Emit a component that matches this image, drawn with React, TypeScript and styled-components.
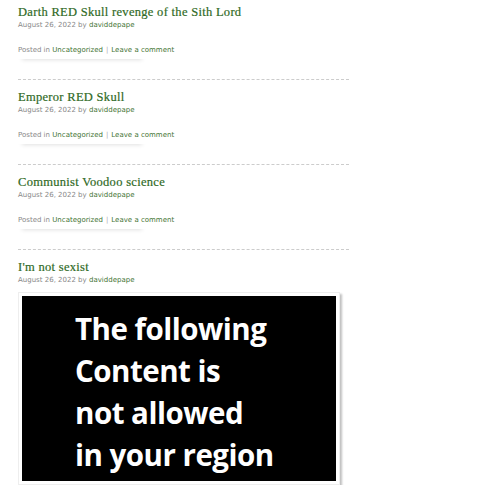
import React from "react";
import styled, {createGlobalStyle} from "styled-components";

const GlobalStyle = createGlobalStyle`
    body {
        margin: 0;
        background: #fff;
    }
`;

const Page = styled.div`
    width: 331px;
    padding: 5px 0 0 18px;
`;

const Post = styled.div<{ last?: boolean }>`
    padding-bottom: ${p => p.last ? "0" : "20px"};
    margin-bottom: ${p => p.last ? "0" : "10px"};
    border-bottom: ${p => p.last ? "none" : "1px dashed #ccc"};
`;

const Title = styled.h2`
    margin: 0;
    font-family: "Liberation Serif", Georgia, serif;
    font-weight: normal;
    font-size: 12.5px;
    line-height: 14px;
    color: #2f6a25;
    letter-spacing: 0.3px;
    -webkit-text-stroke: 0.2px #2f6a25;
`;

const Meta = styled.div`
    margin-top: 1px;
    font-family: "DejaVu Sans", Verdana, sans-serif;
    font-size: 7px;
    line-height: 10px;
    color: #888;
`;

const Link = styled.a`
    color: #3f7434;
    text-decoration: none;
`;

const Footer = styled.div`
    margin-top: 15px;
    font-family: "DejaVu Sans", Verdana, sans-serif;
    font-size: 7px;
    line-height: 10px;
    color: #888;
    width: 128px;
    padding-bottom: 4px;
    box-shadow: 0 5px 4px -4px rgba(0, 0, 0, 0.12);
    white-space: nowrap;
`;

const Sep = styled.span`
    color: #aaa;
    margin: 0 3px;
`;

const Frame = styled.div`
    margin-top: 7px;
    width: 314px;
    padding: 3px;
    border: 1px solid #eee;
    box-shadow: 2px 2px 2px rgba(0, 0, 0, 0.25);
    background: #fff;
`;

const Notice = styled.div`
    background: #000;
    height: 185px;
    padding: 12px 0 0 53px;
    box-sizing: border-box;
    color: #fff;
    font-family: "Open Sans", "Noto Sans", sans-serif;
    font-weight: 700;
    font-size: 29.5px;
    line-height: 42px;
    letter-spacing: -0.5px;
`;

type PostData = { title: string };

const posts: PostData[] = [
    {title: "Darth RED Skull revenge of the Sith Lord"},
    {title: "Emperor RED Skull"},
    {title: "Communist Voodoo science"},
];

const PostMeta = () => (
    <Meta>August 26, 2022 by <Link href="#">daviddepape</Link></Meta>
);

export default function App() {
    return (
        <>
            <GlobalStyle/>
            <Page>
                {posts.map(post => (
                    <Post key={post.title}>
                        <Title>{post.title}</Title>
                        <PostMeta/>
                        <Footer>
                            Posted in <Link href="#">Uncategorized</Link>
                            <Sep>|</Sep>
                            <Link href="#">Leave a comment</Link>
                        </Footer>
                    </Post>
                ))}
                <Post last>
                    <Title>I'm not sexist</Title>
                    <PostMeta/>
                    <Frame>
                        <Notice>
                            The following<br/>
                            Content is<br/>
                            not allowed<br/>
                            in your region
                        </Notice>
                    </Frame>
                </Post>
            </Page>
        </>
    );
}
